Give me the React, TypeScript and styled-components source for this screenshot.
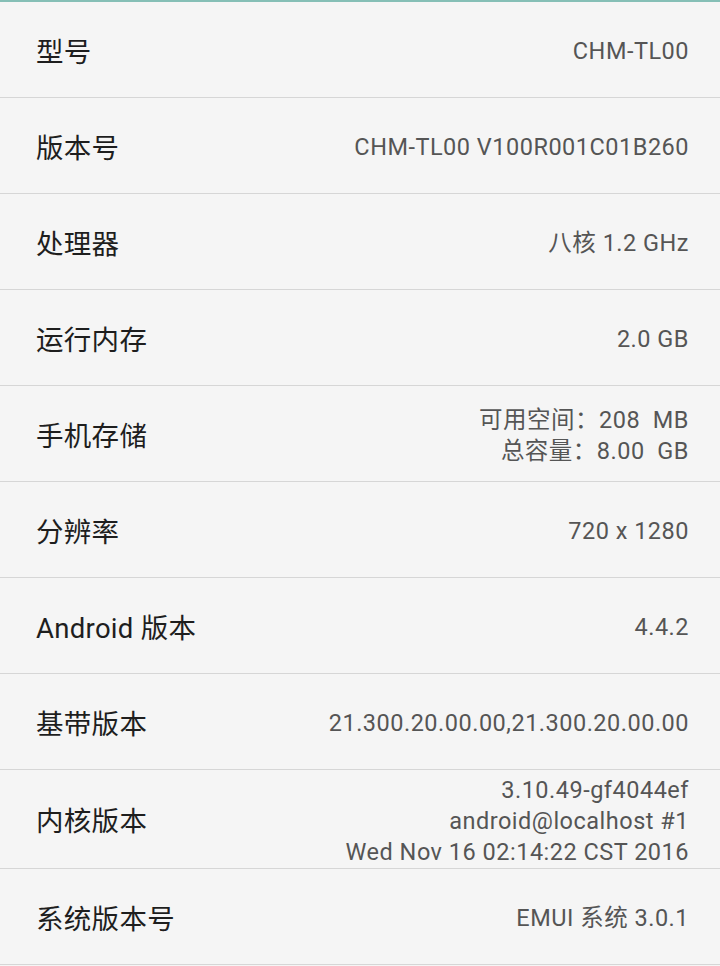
import styled, { createGlobalStyle } from 'styled-components';
import { ReactElement } from 'react';

const GlobalStyle = createGlobalStyle`
  html, body {
    margin: 0;
    padding: 0;
    background: #f5f5f5;
  }
`;

const Page = styled.div`
  width: 720px;
  min-height: 966px;
  background: #f5f5f5;
  border-top: 2px solid #86bfb6;
`;

const Row = styled.div<{ $tall?: boolean }>`
  display: flex;
  align-items: center;
  justify-content: space-between;
  height: ${(p) => (p.$tall ? '98px' : '95px')};
  padding: 0 31px 0 36px;
  border-bottom: 1px solid #d6d6d6;
  box-sizing: content-box;
`;

const Label = styled.span`
  font-family: Roboto, 'Noto Sans CJK SC', sans-serif;
  font-size: 27.5px;
  letter-spacing: 0.3px;
  color: #1e1e1e;
  white-space: nowrap;
`;

const Value = styled.div`
  padding-top: 4px;
  font-family: Roboto, 'Noto Sans CJK SC', sans-serif;
  font-size: 23.5px;
  letter-spacing: 0.5px;
  line-height: 31px;
  color: #555555;
  text-align: right;
  white-space: pre;
`;

const items: { label: string; value: string[]; tall?: boolean }[] = [
  { label: '型号', value: ['CHM-TL00'] },
  { label: '版本号', value: ['CHM-TL00 V100R001C01B260'] },
  { label: '处理器', value: ['八核 1.2 GHz'] },
  { label: '运行内存', value: ['2.0 GB'] },
  { label: '手机存储', value: ['可用空间：208  MB', '总容量：8.00  GB'] },
  { label: '分辨率', value: ['720 x 1280'] },
  { label: 'Android 版本', value: ['4.4.2'] },
  { label: '基带版本', value: ['21.300.20.00.00,21.300.20.00.00'] },
  {
    label: '内核版本',
    value: ['3.10.49-gf4044ef', 'android@localhost #1', 'Wed Nov 16 02:14:22 CST 2016'],
    tall: true,
  },
  { label: '系统版本号', value: ['EMUI 系统 3.0.1'] },
];

const App = (): ReactElement => {
  return (
    <>
      <GlobalStyle />
      <Page>
        {items.map((item) => (
          <Row key={item.label} $tall={item.tall}>
            <Label>{item.label}</Label>
            <Value>
              {item.value.map((line) => (
                <div key={line}>{line}</div>
              ))}
            </Value>
          </Row>
        ))}
      </Page>
    </>
  );
};

export default App;
